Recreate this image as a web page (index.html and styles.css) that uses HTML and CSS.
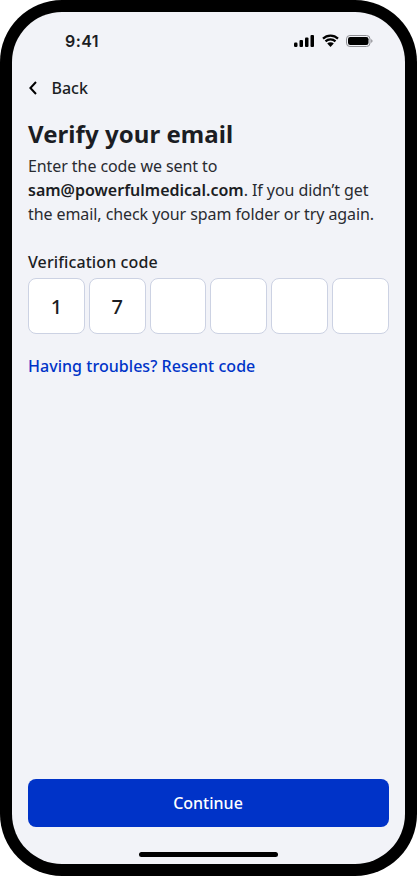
FILE: index.html
```html
<!DOCTYPE html>
<html lang="en">
<head>
<meta charset="utf-8">
<title>Verify your email</title>
<link rel="stylesheet" href="styles.css">
</head>
<body>
<div class="phone">
  <div class="screen">
    <div class="status">
      <span class="time">9:41</span>
      <div class="status-icons">
        <svg class="signal" width="20" height="12" viewBox="0 0 20 12"><rect x="0" y="7.5" width="3.5" height="4.5" rx="1.2"/><rect x="5.5" y="5" width="3.5" height="7" rx="1"/><rect x="11" y="2.5" width="3.5" height="9.5" rx="1"/><rect x="16.5" y="0" width="3.5" height="12" rx="1"/></svg>
        <svg class="wifi" width="17" height="13" viewBox="0 0 17 13"><path d="M1 4.6a10.8 10.8 0 0 1 15 0M3.5 7.4a7.2 7.2 0 0 1 10 0" fill="none" stroke="#000" stroke-width="2.2"/><path d="M8.5 13 5.2 9.6a4.7 4.7 0 0 1 6.6 0Z"/></svg>
        <svg class="battery" width="27" height="12" viewBox="0 0 27 12"><rect x="0.5" y="0.5" width="23.5" height="11" rx="3.4" fill="none" stroke="#8e8e93"/><rect x="2" y="2" width="20.5" height="8" rx="2.2"/><path d="M25.2 4.2c.9.3 1.3 1 1.3 1.8s-.4 1.5-1.3 1.8Z" fill="#8e8e93"/></svg>
      </div>
    </div>
    <div class="content">
      <div class="back">
        <svg width="8" height="14" viewBox="0 0 8 14"><path d="M7 1 1.4 7 7 13" fill="none" stroke="#000" stroke-width="2"/></svg>
        <span>Back</span>
      </div>
      <h1>Verify your email</h1>
      <p class="intro">Enter the code we sent to <strong>sam@powerfulmedical.com</strong>. If you didn’t get the email, check your spam folder or try again.</p>
      <div class="label">Verification code</div>
      <div class="code">
        <div class="digit">1</div>
        <div class="digit">7</div>
        <div class="digit"></div>
        <div class="digit"></div>
        <div class="digit"></div>
        <div class="digit"></div>
      </div>
      <a class="resend">Having troubles? Resent code</a>
      <button class="continue">Continue</button>
    </div>
    <div class="home-bar"></div>
  </div>
</div>
</body>
</html>
```
FILE: styles.css
```css
* { box-sizing: border-box; }
html, body { margin: 0; padding: 0; background: #fff; }
body { width: 417px; height: 876px; overflow: hidden; font-family: "Noto Sans", sans-serif; color: #1b1d23; }
.phone { width: 417px; height: 876px; background: #000; border-radius: 62px; padding: 12px; }
.screen { height: 852px; background: #f2f3f8; border-radius: 50px; display: flex; flex-direction: column; }
.status { height: 58px; flex: none; display: flex; align-items: center; justify-content: space-between; padding: 0 32px 0 53px; }
.time { font-family: Inter, sans-serif; font-size: 16px; font-weight: 600; color: #1b1d23; letter-spacing: 0.4px; line-height: 20px; margin-top: -1px; }
.status-icons { display: flex; align-items: center; gap: 7.5px; margin-top: -1px; }
.content { flex: 1; display: flex; flex-direction: column; padding: 0 16px; min-height: 0; }
.back { height: 36px; display: flex; align-items: center; gap: 14.5px; font-size: 16px; font-weight: 500; padding-left: 1px; flex: none; }
h1 { margin: 12px 0 0; font-size: 24px; line-height: 32px; font-weight: 700; letter-spacing: 0.05px; }
.intro { margin: 0; padding-top: 4px; font-size: 16px; line-height: 24px; letter-spacing: -0.08px; color: #292b31; }
.intro strong { font-weight: 600; letter-spacing: 0; color: #1b1d23; }
.label { margin-top: 24px; font-size: 16px; line-height: 24px; font-weight: 500; letter-spacing: 0.1px; }
.code { display: flex; gap: 4px; margin-top: 4px; }
.digit { flex: 1; height: 56px; background: #fff; border: 1px solid #ccd2e3; border-radius: 8px; display: flex; align-items: center; justify-content: center; font-size: 20px; font-weight: 500; }
.resend { display: block; margin-top: 20px; font-size: 16px; line-height: 24px; font-weight: 500; letter-spacing: 0.04px; color: #0033c8; }
.continue { margin-top: auto; height: 48px; width: 100%; flex: none; background: #0033c8; color: #fff; border: 0; border-radius: 8px; font-family: inherit; font-size: 16px; font-weight: 500; padding: 0 1px 0 0; }
.home-bar { flex: none; width: 139px; height: 5px; margin: 25px auto 7px; background: #000; border-radius: 3px; }
```
